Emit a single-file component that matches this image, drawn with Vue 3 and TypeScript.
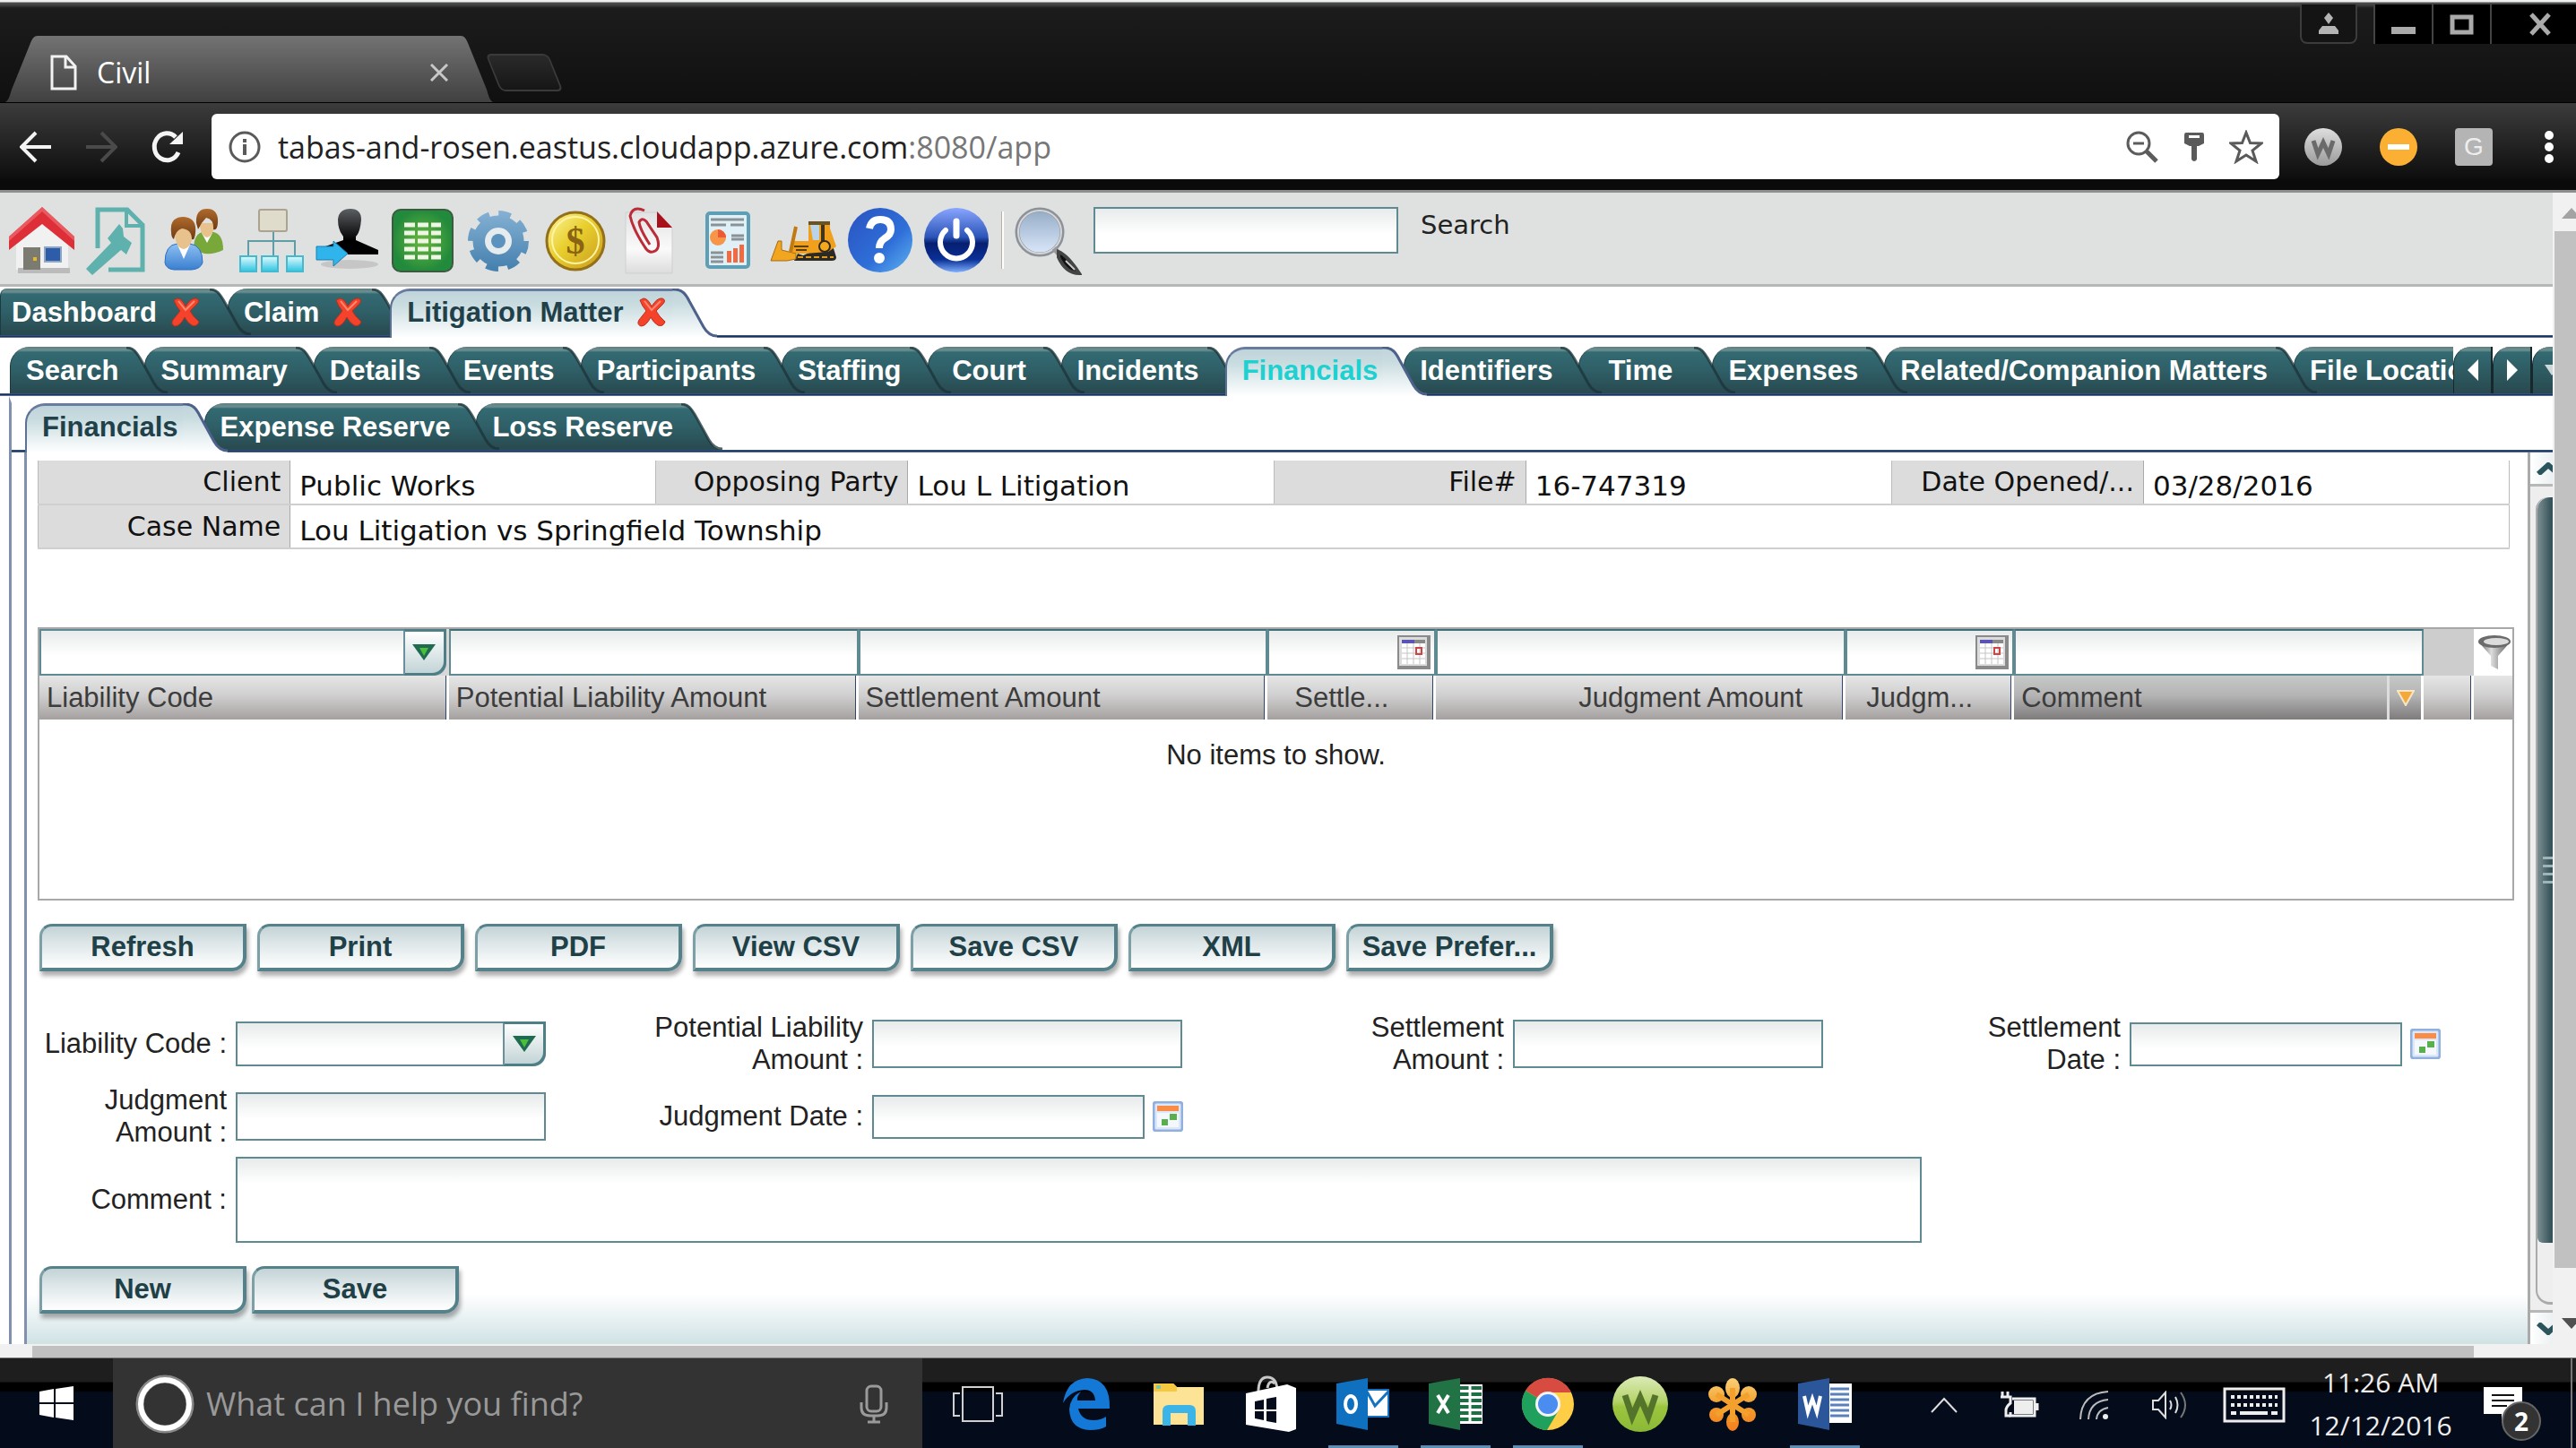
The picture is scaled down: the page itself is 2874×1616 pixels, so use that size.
<script setup lang="ts">
import { ref } from 'vue'

interface Tab {
  label: string
  closable?: boolean
  active?: boolean
}

interface GridColumn {
  key: string
  label: string
  kind: 'select' | 'text' | 'date'
  align?: 'center' | 'right'
}

const windowTabs: Tab[] = [
  { label: 'Dashboard', closable: true },
  { label: 'Claim', closable: true },
  { label: 'Litigation Matter', closable: true, active: true },
]

const matterTabs: Tab[] = [
  { label: 'Search' },
  { label: 'Summary' },
  { label: 'Details' },
  { label: 'Events' },
  { label: 'Participants' },
  { label: 'Staffing' },
  { label: 'Court' },
  { label: 'Incidents' },
  { label: 'Financials', active: true },
  { label: 'Identifiers' },
  { label: 'Time' },
  { label: 'Expenses' },
  { label: 'Related/Companion Matters' },
  { label: 'File Location' },
]

const financialTabs: Tab[] = [
  { label: 'Financials', active: true },
  { label: 'Expense Reserve' },
  { label: 'Loss Reserve' },
]

const tabRows = [
  { id: 'windows', tabs: windowTabs },
  { id: 'matter', tabs: matterTabs },
  { id: 'financial', tabs: financialTabs },
]

const columns: GridColumn[] = [
  { key: 'liability', label: 'Liability Code', kind: 'select' },
  { key: 'potential', label: 'Potential Liability Amount', kind: 'text' },
  { key: 'settlement', label: 'Settlement Amount', kind: 'text' },
  { key: 'settleDate', label: 'Settle...', kind: 'date', align: 'center' },
  { key: 'judgment', label: 'Judgment Amount', kind: 'text', align: 'right' },
  { key: 'judgDate', label: 'Judgm...', kind: 'date', align: 'center' },
]

const gridActions = ['Refresh', 'Print', 'PDF', 'View CSV', 'Save CSV', 'XML', 'Save Prefer...']

const form = ref({
  liability: '',
  potential: '',
  settlement: '',
  settlementDate: '',
  judgment: '',
  judgmentDate: '',
  comment: '',
})
const query = ref('')
</script>

<template>
  <div class="screen">
    <svg class="defs" width="0" height="0" aria-hidden="true">
      <defs>
        <linearGradient id="tabDark" x1="0" y1="0" x2="0" y2="1">
          <stop offset="0" stop-color="#5f7f80" /><stop offset=".07" stop-color="#6c8f91" />
          <stop offset=".12" stop-color="#336a72" /><stop offset=".5" stop-color="#2f5f67" /><stop offset="1" stop-color="#28494f" />
        </linearGradient>
        <linearGradient id="tabLight" x1="0" y1="0" x2="0" y2="1">
          <stop offset="0" stop-color="#bfd4da" /><stop offset=".3" stop-color="#c9dce0" /><stop offset="1" stop-color="#fff" />
        </linearGradient>
        <linearGradient id="chromeTab" x1="0" y1="0" x2="0" y2="1">
          <stop offset="0" stop-color="#737373" /><stop offset="1" stop-color="#404040" />
        </linearGradient>
        <linearGradient id="gold" x1="0" y1="0" x2="1" y2="1">
          <stop offset="0" stop-color="#fff6a0" /><stop offset=".45" stop-color="#e8cf2e" /><stop offset="1" stop-color="#c99a1c" />
        </linearGradient>
        <linearGradient id="blueBall" x1="0" y1="0" x2="1" y2="1">
          <stop offset="0" stop-color="#2a52c0" /><stop offset=".6" stop-color="#2f6fd8" /><stop offset="1" stop-color="#5fb4f2" />
        </linearGradient>
        <linearGradient id="powerBall" x1="0" y1="0" x2="0" y2="1">
          <stop offset="0" stop-color="#8aa6ff" /><stop offset=".45" stop-color="#2b55b8" /><stop offset=".55" stop-color="#061f70" />
          <stop offset=".8" stop-color="#0a2f96" /><stop offset="1" stop-color="#7fb0ff" />
        </linearGradient>
        <radialGradient id="greenSheet"><stop offset="0" stop-color="#6db83e" /><stop offset="1" stop-color="#228a3c" /></radialGradient>
        <linearGradient id="gear" gradientUnits="userSpaceOnUse" x1="0" y1="0" x2="0" y2="76"><stop offset="0" stop-color="#8ab4d6" /><stop offset="1" stop-color="#3f7cab" /></linearGradient>
        <linearGradient id="cyanBox" x1="0" y1="0" x2="0" y2="1"><stop offset="0" stop-color="#e4fbff" /><stop offset="1" stop-color="#2bc4e2" /></linearGradient>
        <linearGradient id="blueShirt" x1="0" y1="0" x2="0" y2="1"><stop offset="0" stop-color="#8fc0f2" /><stop offset="1" stop-color="#3a7fd0" /></linearGradient>
        <linearGradient id="hair" x1="0" y1="0" x2="0" y2="1"><stop offset="0" stop-color="#b06a2c" /><stop offset="1" stop-color="#6e3a12" /></linearGradient>
        <linearGradient id="paper" x1="0" y1="0" x2="0" y2="1"><stop offset="0" stop-color="#e2e2e4" /><stop offset=".6" stop-color="#fafafa" /><stop offset="1" stop-color="#dcdcdc" /></linearGradient>
        <linearGradient id="bust" x1="0" y1="0" x2="0" y2="1"><stop offset="0" stop-color="#5c5f63" /><stop offset=".7" stop-color="#000" /></linearGradient>
        <linearGradient id="lens" x1="0" y1="0" x2="0" y2="1"><stop offset="0" stop-color="#93abc6" /><stop offset="1" stop-color="#dce8fa" /></linearGradient>
        <linearGradient id="limeBall" x1="0" y1="0" x2="0" y2="1"><stop offset="0" stop-color="#dcebb8" /><stop offset=".45" stop-color="#b5d36a" /><stop offset=".55" stop-color="#9cc53f" /><stop offset="1" stop-color="#8ab836" /></linearGradient>
        <linearGradient id="greyBall" x1="0" y1="0" x2="0" y2="1"><stop offset="0" stop-color="#dedede" /><stop offset="1" stop-color="#9a9a9a" /></linearGradient>
        <linearGradient id="petals" gradientUnits="userSpaceOnUse" x1="0" y1="0" x2="0" y2="60"><stop offset="0" stop-color="#fbd27a" /><stop offset=".5" stop-color="#f3a02c" /><stop offset="1" stop-color="#f57f20" /></linearGradient>
        <linearGradient id="funnel" x1="0" y1="0" x2="1" y2="0"><stop offset="0" stop-color="#555" /><stop offset=".4" stop-color="#ddd" /><stop offset="1" stop-color="#555" /></linearGradient>
      </defs>
    </svg>

    <!-- Browser frame -->
    <header class="browser">
      <div class="titlebar">
        <div class="browser-tab">
          <svg class="slope" width="36" height="74" viewBox="0 0 36 74"><path d="M0 74C4 72 5 66 7 60L28 8C30 3 32 0 36 0V74Z" fill="url(#chromeTab)" /></svg>
          <div class="browser-tab-body">
            <svg width="30" height="40" viewBox="0 0 30 40" fill="none" stroke="#f2f2f2" stroke-width="3"><path d="M2 2H18L28 13V38H2Z" /><path d="M17 2V14H28" /></svg>
            <span class="browser-tab-title">Civil</span>
            <button class="plain" aria-label="Close tab"><svg width="20" height="20" viewBox="0 0 20 20" stroke="#c8c8c8" stroke-width="3"><path d="M1 1L19 19M19 1L1 19" /></svg></button>
          </div>
          <svg class="slope" width="36" height="74" viewBox="0 0 36 74"><path d="M0 0C4 0 6 3 8 8L29 60C31 66 32 72 36 74H0Z" fill="url(#chromeTab)" /></svg>
        </div>
        <button class="new-tab" aria-label="New tab"></button>
        <button class="profile" aria-label="Profile"><svg width="24" height="26" viewBox="0 0 24 26" fill="#b4b4b4"><path d="M12 1L17 7L12 14L7 7Z" /><path d="M1 25V21L5 16H19L23 21V25Z" /></svg></button>
        <div class="window-controls">
          <button aria-label="Minimize"><svg width="28" height="26" viewBox="0 0 28 26"><path d="M0 16H27V24H0Z" fill="#aaa" /></svg></button>
          <button aria-label="Maximize"><svg width="28" height="26" viewBox="0 0 28 26"><path d="M3 5H24V22H3Z" fill="none" stroke="#aaa" stroke-width="5" /></svg></button>
          <button class="close" aria-label="Close"><svg width="26" height="26" viewBox="0 0 26 26"><path d="M3 2L23 24M23 2L3 24" stroke="#aaa" stroke-width="5" /></svg></button>
        </div>
      </div>
      <div class="addressbar">
        <button class="plain" aria-label="Back"><svg width="36" height="36" viewBox="0 0 36 36" fill="none" stroke="#f4f4f4" stroke-width="4"><path d="M35 18H3M18 2L2 18L18 34" /></svg></button>
        <button class="plain" aria-label="Forward"><svg width="36" height="36" viewBox="0 0 36 36" fill="none" stroke="#4a4a4a" stroke-width="4"><path d="M1 18H33M18 2L34 18L18 34" /></svg></button>
        <button class="plain" aria-label="Reload"><svg width="38" height="38" viewBox="0 0 38 38"><path d="M31 25A14 15 0 1 1 28 8" fill="none" stroke="#f4f4f4" stroke-width="5" /><path d="M36 2V16H21Z" fill="#f4f4f4" /></svg></button>
        <div class="omnibox">
          <svg width="38" height="38" viewBox="0 0 38 38"><circle cx="19" cy="19" r="16" fill="none" stroke="#5a5a5a" stroke-width="3" /><path d="M17 16H21V28H17ZM17 10H21V14H17Z" fill="#5a5a5a" /></svg>
          <span class="url">tabas-and-rosen.eastus.cloudapp.azure.com<span class="path">:8080/app</span></span>
          <svg width="38" height="38" viewBox="0 0 38 38" fill="none" stroke="#5c5c5c"><circle cx="15" cy="15" r="12" stroke-width="3" /><path d="M9 15H21" stroke-width="3" /><path d="M24 24L35 35" stroke-width="5" /></svg>
          <svg width="22" height="34" viewBox="0 0 22 34"><path d="M2 1H20Q22 1 22 4V13L16 16H14V31Q11 35 8 31V16H6L0 13V4Q0 1 2 1Z" fill="#5a5a5a" /><path d="M5 4H17V7H5Z" fill="#fff" /></svg>
          <svg width="38" height="38" viewBox="0 0 38 38"><path d="M19 3L23.500 14.500L36 15L26 23L30 35L19 28L8 35L12 23L2 15L14.500 14.500Z" fill="none" stroke="#5a5a5a" stroke-width="3" /></svg>
        </div>
        <svg width="42" height="42" viewBox="0 0 42 42"><circle cx="21" cy="21" r="21" fill="url(#greyBall)" /><path d="M10 14L15 29L21 16L27 29L32 14" fill="none" stroke="#6a6a6a" stroke-width="5" /></svg>
        <svg width="42" height="42" viewBox="0 0 42 42"><circle cx="21" cy="21" r="21" fill="#fbb034" /><path d="M9 18H33V24H9Z" fill="#fff" /></svg>
        <span class="g-badge">G</span>
        <button class="plain" aria-label="Menu"><svg width="10" height="36" viewBox="0 0 10 36" fill="#fff"><circle cx="5" cy="5" r="5" /><circle cx="5" cy="18" r="5" /><circle cx="5" cy="31" r="5" /></svg></button>
      </div>
    </header>

    <div class="viewport">
      <div class="app">
        <!-- Application toolbar -->
        <nav class="toolbar" aria-label="Main">
          <button class="tool" aria-label="Home"><svg width="76" height="76" viewBox="0 0 76 76"><path d="M10 38L39 10L68 38V70H10Z" fill="#f1f1f1" /><path d="M12 68H70V74H12Z" fill="#bbb" /><path d="M39 0L75 33V48L39 19L2 48V33Z" fill="#de2f38" /><path d="M39 0L2 33V38L39 5L75 38V33Z" fill="#f0787c" opacity=".6" /><path d="M18 45H37V70H18Z" fill="#7b7b72" /><path d="M29 56H33V60H29Z" fill="#e8b820" /><path d="M42 45H60V61H42Z" fill="#2d5ca8" stroke="#8fa5c4" stroke-width="2" /></svg></button>
          <button class="tool" aria-label="Matters"><svg width="76" height="76" viewBox="0 0 76 76"><path d="M16 46V3H49L66 20V70H28" fill="none" stroke="#5fb1ae" stroke-width="5" /><path d="M48 3V21H66" fill="none" stroke="#5fb1ae" stroke-width="4" /><path d="M40 19L44 24L45 33L54 40L48 53L42 48L10 76L3 69L31 40L27 35Z" fill="#5fb1ae" /></svg></button>
          <button class="tool" aria-label="Contacts"><svg width="76" height="76" viewBox="0 0 76 76"><path d="M38 48Q38 28 50 28H60Q71 30 71 48Q62 53 50 52Z" fill="#79a83a" /><path d="M47 29L53 40L59 29Z" fill="#fff" /><path d="M45 18Q45 32 53 34Q61 32 61 18Z" fill="#e8c28c" /><path d="M41 18Q40 2 53 2Q66 2 65 18Q64 27 60 25Q61 14 52 12Q46 18 43 25Z" fill="url(#hair)" /><path d="M6 62Q6 42 20 41H34Q48 43 48 62Q46 69 36 70H16Q7 69 6 62Z" fill="url(#blueShirt)" stroke="#2f6fc0" /><path d="M20 42L27 58L34 42Z" fill="#fff" /><path d="M17 30Q18 46 27 47Q36 45 37 30L27 20Z" fill="#e8c28c" /><path d="M13 28Q11 11 27 11Q42 12 40 29Q39 38 36 36Q36 25 25 24Q18 26 16 36Q13 34 13 28Z" fill="url(#hair)" /></svg></button>
          <button class="tool" aria-label="Hierarchy"><svg width="76" height="76" viewBox="0 0 76 76"><path d="M42 27V56M14 55V38H66V55" fill="none" stroke="#5f9ea6" stroke-width="2" /><rect x="26" y="3" width="31" height="24" rx="2" fill="#e0dccc" stroke="#a9a390" stroke-width="2" /><g fill="url(#cyanBox)" stroke="#45b9cd" stroke-width="2"><rect x="5" y="55" width="18" height="17" /><rect x="29" y="55" width="18" height="17" /><rect x="57" y="55" width="18" height="17" /></g></svg></button>
          <button class="tool" aria-label="Transfer"><svg width="76" height="76" viewBox="0 0 76 76"><ellipse cx="42" cy="64" rx="32" ry="5" fill="#c6c6c6" /><path d="M29 14Q30 2 43 2Q55 2 55 14Q54 28 49 33V37L74 48V53H8L15 44L35 37V33Q29 26 29 14Z" fill="url(#bust)" /><path d="M5 44H24V38L40 52L24 66V59H5Z" fill="#2fb4ec" stroke="#1a80b4" /></svg></button>
          <button class="tool" aria-label="Spreadsheet"><svg width="76" height="76" viewBox="0 0 76 76"><rect x="5" y="3" width="67" height="69" rx="9" fill="url(#greenSheet)" stroke="#3c5a40" stroke-width="2" /><path d="M18 20H59M18 29H59M18 38H59M18 47H59M18 56H59" stroke="#eef6e4" stroke-width="5" stroke-dasharray="12 3" /></svg></button>
          <button class="tool" aria-label="Settings"><svg width="76" height="76" viewBox="0 0 76 76"><circle cx="38" cy="38" r="29" fill="none" stroke="url(#gear)" stroke-width="10" stroke-dasharray="13 9.776" /><circle cx="38" cy="38" r="21" fill="none" stroke="url(#gear)" stroke-width="15" /><circle cx="38" cy="38" r="15" fill="#e6ebee" /><circle cx="38" cy="38" r="8" fill="#5c93be" /></svg></button>
          <button class="tool" aria-label="Billing"><svg width="76" height="76" viewBox="0 0 76 76"><circle cx="39" cy="38" r="32" fill="url(#gold)" stroke="#94701a" stroke-width="3" /><circle cx="39" cy="37" r="26" fill="none" stroke="#fff3a6" stroke-width="2" /><text x="39" y="52" text-anchor="middle" class="coin">$</text></svg></button>
          <button class="tool" aria-label="Attachments"><svg width="76" height="76" viewBox="0 0 76 76"><path d="M10 6H46L62 24V74H10Z" fill="url(#paper)" stroke="#cfcfcf" /><path d="M45 5L62 23H45Z" fill="#a8101c" /><path d="M31 4Q18 -2 15 10Q18 24 31 44Q36 53 43 49Q49 45 45 34L33 16Q28 11 25 17Q26 25 37 42" fill="none" stroke="#bb2c38" stroke-width="3" /></svg></button>
          <button class="tool" aria-label="Reports"><svg width="76" height="76" viewBox="0 0 76 76"><rect x="16" y="7" width="46" height="60" rx="3" fill="#dff0f6" stroke="#5f9fb6" stroke-width="4" /><path d="M20 14H57M20 20H37M42 20H57M43 32H57M43 36H57M20 51H34M20 56H34M20 61H34" stroke="#8b9296" stroke-width="3" /><circle cx="28" cy="34" r="9" fill="#f79548" /><path d="M28 34V25A9 9 0 0 1 37 34Z" fill="#ee5a38" /><path d="M38 62V49H43V62ZM45 62V46H50V62ZM52 62V42H57V62Z" fill="#f06a42" /></svg></button>
          <button class="tool" aria-label="Operations"><svg width="76" height="76" viewBox="0 0 76 76"><path d="M38 54L70 40L75 56Q75 60 70 60H28L32 52Z" fill="#2d2a24" /><path d="M26 38H44V16H68V24L75 44L66 50L40 52H26Z" fill="#f0a01c" /><path d="M44 16H68V20H44Z" fill="#6a5424" /><path d="M46 20H56V37H49Z" fill="#b9d3e8" /><path d="M58 20H62V40H58Z" fill="#40341c" /><path d="M28 44H44M30 48H42" stroke="#5a4210" stroke-width="2" /><path d="M24 50L30 22" stroke="#c07a10" stroke-width="4" /><path d="M2 60L10 38L14 38V48L30 52V58L20 60Z" fill="#f2a51e" stroke="#a86c12" /><circle cx="62" cy="44" r="6" fill="#f5a81c" stroke="#2d2a24" stroke-width="2" /><path d="M32 56H72" stroke="#e09a1c" stroke-width="2" stroke-dasharray="6 3" /></svg></button>
          <button class="tool" aria-label="Help"><svg width="76" height="76" viewBox="0 0 76 76"><circle cx="39" cy="37" r="36" fill="url(#blueBall)" /><path d="M27 24Q29 14 39 14Q51 14 51 25Q51 31 44 35Q38 39 38 46" fill="none" stroke="#fff" stroke-width="8" /><circle cx="38" cy="57" r="6" fill="#fff" /></svg></button>
          <button class="tool" aria-label="Log off"><svg width="76" height="76" viewBox="0 0 76 76"><circle cx="39" cy="37" r="36" fill="url(#powerBall)" /><path d="M27 26A18 18 0 1 0 51 26" fill="none" stroke="#fff" stroke-width="6" stroke-linecap="round" /><path d="M39 16V32" stroke="#fff" stroke-width="7" stroke-linecap="round" /></svg></button>
          <span class="tool-divider"></span>
          <svg width="76" height="76" viewBox="0 0 76 76" aria-hidden="true"><circle cx="29" cy="28" r="25" fill="url(#lens)" stroke="#8d9299" stroke-width="5" /><circle cx="29" cy="28" r="24" fill="none" stroke="#d4d6da" stroke-width="2" /><path d="M45 46L52 54" stroke="#999" stroke-width="6" /><path d="M50 50Q60 54 73 74Q58 74 50 56Z" fill="#111" stroke="#444" stroke-width="4" /><path d="M58 60L68 70" stroke="#ccc" stroke-width="2" /></svg>
          <input id="quick-search" v-model="query" class="field quick" type="text" />
          <label class="quick-label" for="quick-search">Search</label>
        </nav>

        <!-- Tab rows -->
        <div v-for="row in tabRows" :key="row.id" class="tab-row" :class="row.id">
          <div class="tab-strip" role="tablist">
            <button
              v-for="(tab, i) in row.tabs"
              :key="tab.label"
              class="tab"
              :class="{ active: tab.active }"
              role="tab"
              :aria-selected="!!tab.active"
              :style="{ zIndex: tab.active ? 40 : 30 - i }"
            >
              <span class="tab-body">
                <span>{{ tab.label }}</span>
                <svg v-if="tab.closable" width="32" height="34" viewBox="0 0 32 34"><path d="M7 2Q12 2 16 11Q22 1 28 2Q33 4 28 9L21 16Q24 22 31 28Q29 34 23 32Q18 29 15 23Q10 33 4 33Q-1 31 2 26L10 16Q5 10 3 4Z" fill="#f5432b" stroke="#b8301c" /><path d="M8 5L16 15L26 5" fill="none" stroke="#ff8a70" stroke-width="2" /></svg>
              </span>
              <svg v-if="tab.active" class="tab-cap" width="50" height="55" viewBox="0 0 50 55"><path d="M0 0H2C12 0 15 5 20 14L35 43C39 50 43 54 50 54V55H0Z" fill="url(#tabLight)" /><path d="M0 1H2C11 1 15 6 19 14L35 43C39 50 43 53 50 53" fill="none" stroke="#4d618a" stroke-width="3" /></svg>
              <svg v-else class="tab-cap" width="50" height="52" viewBox="0 0 50 52"><path d="M0 0H2C12 0 15 5 20 14L35 41C39 48 43 52 50 52H0Z" fill="url(#tabDark)" /><path d="M4 1C12 1 15 6 20 14L35 41C39 48 43 51 50 51" fill="none" stroke="#1b3338" stroke-width="3" opacity=".75" /></svg>
            </button>
          </div>
          <div v-if="row.id === 'matter'" class="tab-nav">
            <button aria-label="Scroll tabs left"><svg width="12" height="24" viewBox="0 0 12 24"><path d="M12 0V24L0 12Z" fill="#fff" /></svg></button>
            <button aria-label="Scroll tabs right"><svg width="12" height="24" viewBox="0 0 12 24"><path d="M0 0V24L12 12Z" fill="#fff" /></svg></button>
            <button class="cut" aria-label="Choose tab"><svg width="16" height="12" viewBox="0 0 16 12"><path d="M0 0H16L8 12Z" fill="#cfd8d8" /></svg></button>
          </div>
        </div>

        <div class="frame-outer">
          <div class="frame-inner">
            <main class="pane">
              <table class="summary">
                <colgroup>
                  <template v-for="n in 4" :key="n"><col class="c-label" /><col /></template>
                </colgroup>
                <tbody>
                  <tr>
                    <th scope="row">Client</th><td>Public Works</td>
                    <th scope="row">Opposing Party</th><td>Lou L Litigation</td>
                    <th scope="row">File#</th><td>16-747319</td>
                    <th scope="row">Date Opened/...</th><td>03/28/2016</td>
                  </tr>
                  <tr><th scope="row">Case Name</th><td colspan="7">Lou Litigation vs Springfield Township</td></tr>
                </tbody>
              </table>

              <table class="grid">
                <colgroup>
                  <col /><col /><col /><col class="c-date" /><col /><col class="c-date" /><col /><col class="c-spare" /><col class="c-tool" />
                </colgroup>
                <thead>
                  <tr class="filters">
                    <td v-for="col in columns" :key="col.key">
                      <div v-if="col.kind === 'select'" class="combo">
                        <select :aria-label="'Filter ' + col.label"><option></option></select>
                        <span class="picker"><svg width="26" height="18" viewBox="0 0 26 18"><path d="M0 0H26L13 18Z" fill="#1f6b52" /><path d="M8 4H18L13 13Z" fill="#4bbf3a" /></svg></span>
                      </div>
                      <div v-else class="field filter">
                        <input type="text" :aria-label="'Filter ' + col.label" />
                        <button v-if="col.kind === 'date'" class="plain" :aria-label="'Pick ' + col.label"><svg width="37" height="38" viewBox="0 0 37 38"><path d="M0 0H37V38H0Z" fill="#8a8a8a" /><path d="M2 2H33V34H2Z" fill="#dcdcdc" /><path d="M5 5H31V32H5Z" fill="#fff" /><path d="M5 5H31V9H5Z" fill="#888" /><path d="M5 5H19V9H5Z" fill="#5a55b4" /><path d="M5 14H31M5 20H31M5 26H31M11 9V32M18 9V32M25 9V32" stroke="#c4c4c4" /><path d="M21 14H27V21H21Z" fill="none" stroke="#c44" stroke-width="2" /></svg></button>
                      </div>
                    </td>
                    <td><div class="field filter"><input type="text" aria-label="Filter Comment" /></div></td>
                    <td class="blank"></td>
                    <td class="funnel">
                      <button class="plain" aria-label="Apply filter"><svg width="38" height="40" viewBox="0 0 38 40"><path d="M1 8L15 24V35L23 39V24L37 8Z" fill="url(#funnel)" /><ellipse cx="19" cy="8" rx="18" ry="7" fill="#6b6b6b" /><ellipse cx="21" cy="8" rx="14" ry="4" fill="#dcdcdc" /></svg></button>
                    </td>
                  </tr>
                  <tr class="heads">
                    <th v-for="col in columns" :key="col.key" scope="col" :class="col.align">{{ col.label }}</th>
                    <th scope="col" class="sorted">
                      <div>Comment<span class="sort"><svg width="20" height="18" viewBox="0 0 20 18"><path d="M1 1H19L10 17Z" fill="#f2a83a" stroke="#f8e6c4" stroke-width="2" /></svg></span></div>
                    </th>
                    <td></td>
                    <td class="last"></td>
                  </tr>
                </thead>
                <tbody>
                  <tr><td class="empty" colspan="9">No items to show.</td></tr>
                </tbody>
              </table>

              <div class="actions">
                <button v-for="a in gridActions" :key="a" class="btn">{{ a }}</button>
              </div>

              <form class="editor" @submit.prevent>
                <label for="f-liability">Liability Code :</label>
                <div class="combo small">
                  <select id="f-liability" v-model="form.liability"><option value=""></option></select>
                  <span class="picker"><svg width="26" height="18" viewBox="0 0 26 18"><path d="M0 0H26L13 18Z" fill="#1f6b52" /><path d="M8 4H18L13 13Z" fill="#4bbf3a" /></svg></span>
                </div>
                <label for="f-potential">Potential Liability Amount :</label>
                <input id="f-potential" v-model="form.potential" class="field" type="text" />
                <label for="f-settlement">Settlement<br />Amount :</label>
                <input id="f-settlement" v-model="form.settlement" class="field" type="text" />
                <label for="f-settle-date">Settlement<br />Date :</label>
                <div class="date">
                  <input id="f-settle-date" v-model="form.settlementDate" class="field" type="text" />
                  <button class="plain" type="button" aria-label="Pick settlement date"><svg width="34" height="34" viewBox="0 0 34 34"><rect x="1" y="1" width="32" height="32" rx="3" fill="#dce8f8" stroke="#8fb0e0" stroke-width="3" /><path d="M5 5H29V11H5Z" fill="#fa8c46" /><path d="M5 13H29V29H5Z" fill="#f4f8fd" /><path d="M19 14H27V21H19ZM10 20H17V27H10Z" fill="#58b04c" /></svg></button>
                </div>
                <label for="f-judgment">Judgment<br />Amount :</label>
                <input id="f-judgment" v-model="form.judgment" class="field" type="text" />
                <label for="f-judgment-date">Judgment Date :</label>
                <div class="date">
                  <input id="f-judgment-date" v-model="form.judgmentDate" class="field" type="text" />
                  <button class="plain" type="button" aria-label="Pick judgment date"><svg width="34" height="34" viewBox="0 0 34 34"><rect x="1" y="1" width="32" height="32" rx="3" fill="#dce8f8" stroke="#8fb0e0" stroke-width="3" /><path d="M5 5H29V11H5Z" fill="#fa8c46" /><path d="M5 13H29V29H5Z" fill="#f4f8fd" /><path d="M19 14H27V21H19ZM10 20H17V27H10Z" fill="#58b04c" /></svg></button>
                </div>
                <label class="row-start" for="f-comment">Comment :</label>
                <textarea id="f-comment" v-model="form.comment" class="field comment"></textarea>
              </form>

              <div class="actions tight">
                <button class="btn">New</button>
                <button class="btn">Save</button>
              </div>
            </main>
            <div class="inner-scroll" aria-hidden="true">
              <span class="arrow"><svg width="26" height="14" viewBox="0 0 26 14"><path d="M2 13L13 3L24 13" fill="none" stroke="#2b555c" stroke-width="6" /></svg></span>
              <span class="track"><span class="thumb"><i></i><i></i><i></i><i></i></span></span>
              <span class="arrow"><svg width="26" height="14" viewBox="0 0 26 14"><path d="M2 1L13 11L24 1" fill="none" stroke="#2b555c" stroke-width="6" /></svg></span>
            </div>
          </div>
        </div>
      </div>
      <div class="page-scroll" aria-hidden="true">
        <svg width="22" height="12" viewBox="0 0 22 12"><path d="M0 12L11 0L22 12Z" fill="#a3a3a3" /></svg>
        <span></span>
        <svg width="22" height="12" viewBox="0 0 22 12"><path d="M0 0H22L11 12Z" fill="#505050" /></svg>
      </div>
    </div>
    <div class="bottom-scroll" aria-hidden="true"><span></span></div>

    <!-- Taskbar -->
    <footer class="taskbar">
      <button class="start" aria-label="Start"><svg width="38" height="38" viewBox="0 0 38 38" fill="#fff"><path d="M0 6L16 3V18H0ZM18 3L38 0V18H18ZM0 20H16V35L0 32ZM18 20H38V38L18 35Z" /></svg></button>
      <label class="cortana">
        <svg width="66" height="68" viewBox="0 0 66 68"><circle cx="33" cy="34" r="28" fill="none" stroke="#888" stroke-width="9" /><circle cx="33" cy="34" r="27" fill="none" stroke="#fff" stroke-width="6" /></svg>
        <input type="text" placeholder="What can I help you find?" aria-label="What can I help you find?" />
        <svg width="32" height="44" viewBox="0 0 32 44" fill="none" stroke="#9a9a9a" stroke-width="3"><rect x="8" y="2" width="16" height="28" rx="5" /><path d="M2 20V26Q2 35 12 35H20Q30 35 30 26V20M16 35V42M9 42H23" /></svg>
      </label>
      <button class="task wide" aria-label="Task view"><svg width="58" height="40" viewBox="0 0 58 40" fill="none" stroke="#d0d0d0" stroke-width="2"><path d="M12 1H46V39H12ZM9 8H2V33H9M49 8H56V33H49" /></svg></button>
      <button class="task" aria-label="Edge"><svg width="60" height="60" viewBox="0 0 60 60"><path d="M4 29Q8 2 31 1Q57 2 56 35H21Q24 48 38 48Q46 48 52 44V55Q46 59 34 59Q12 58 11 36Q12 22 24 16Q19 22 20 26H40Q39 14 28 14Q12 15 4 29Z" fill="#1479d6" /></svg></button>
      <button class="task" aria-label="File Explorer"><svg width="60" height="60" viewBox="0 0 60 60"><path d="M2 7H24L28 11H58V53H2Z" fill="#fde395" /><path d="M2 7H24L28 11V16H2Z" fill="#f5c840" /><path d="M5 9H10V13H5Z" fill="#7ec8a8" /><path d="M12 54V38Q12 31 19 31H42Q49 31 49 38V54H40V40H21V54Z" fill="#3cb4e7" /></svg></button>
      <button class="task" aria-label="Store"><svg width="60" height="64" viewBox="0 0 60 64"><path d="M16 18Q16 2 26 2Q36 2 37 16M26 14Q28 4 34 9" fill="none" stroke="#c8c8c8" stroke-width="3" /><path d="M2 20L48 10L58 14V60L50 63L2 55Z" fill="#fff" /><path d="M12 29L22 27V38H12ZM25 26L36 24V38H25ZM12 40H22V50L12 48ZM25 40H36V53L25 51Z" fill="#060c1c" /></svg></button>
      <button class="task open" aria-label="Outlook"><svg width="60" height="60" viewBox="0 0 60 60"><path d="M34 14H58V44H34Z" fill="#fff" stroke="#1672c0" stroke-width="2" /><path d="M34 16L43 32L58 16" fill="none" stroke="#1672c0" stroke-width="3" /><path d="M0 7L35 1V59L0 52Z" fill="#1070c0" /><ellipse cx="16" cy="30" rx="6" ry="9" fill="none" stroke="#fff" stroke-width="4" /></svg></button>
      <button class="task open" aria-label="Excel"><svg width="60" height="60" viewBox="0 0 60 60"><path d="M33 8H60V52H33Z" fill="#fff" /><path d="M34 12H59M34 19H59M34 26H59M34 33H59M34 40H59M34 47H59" stroke="#1d7044" stroke-width="4" /><path d="M46 8V52" stroke="#fff" stroke-width="3" /><path d="M0 7L35 1V59L0 52Z" fill="#217346" /><path d="M10 20L22 40M22 20L10 40" stroke="#fff" stroke-width="4" /></svg></button>
      <button class="task open" aria-label="Chrome"><svg width="60" height="60" viewBox="0 0 60 60"><circle cx="30" cy="30" r="29" fill="#ffcd46" /><path d="M30 30L5 15A29 29 0 0 1 56 17H30Z" fill="#d84b40" /><path d="M30 30L5 15A29 29 0 0 0 29 59L42 37Z" fill="#1fa05c" /><circle cx="30" cy="30" r="14" fill="#f4f4f4" /><circle cx="30" cy="30" r="11" fill="#4a8cf0" /></svg></button>
      <button class="task" aria-label="Webroot"><svg width="62" height="62" viewBox="0 0 62 62"><circle cx="31" cy="31" r="31" fill="url(#limeBall)" /><path d="M14 21L22 45L31 24L40 45L48 21" fill="none" stroke="#54742c" stroke-width="7" /></svg></button>
      <button class="task" aria-label="Citrix"><svg width="60" height="60" viewBox="0 0 60 60"><g fill="url(#petals)"><ellipse cx="30" cy="12" rx="8" ry="11" /><ellipse cx="30" cy="50" rx="7" ry="10" /><circle cx="12" cy="19" r="9" /><circle cx="48" cy="19" r="9" /><circle cx="12" cy="42" r="8" /><circle cx="48" cy="42" r="8" /></g><path d="M30 12V50M12 19L48 42M48 19L12 42" stroke="#f3a02c" stroke-width="6" /></svg></button>
      <button class="task open" aria-label="Word"><svg width="60" height="60" viewBox="0 0 60 60"><path d="M33 7H60V51H33Z" fill="#fff" /><path d="M36 13H57M36 19H57M36 25H57M36 31H57M36 37H57M36 43H57" stroke="#5a80bc" stroke-width="3" /><path d="M0 7L35 1V59L0 52Z" fill="#2b579a" /><path d="M7 21L11 39L16 24L21 39L25 21" fill="none" stroke="#fff" stroke-width="4" /></svg></button>

      <div class="tray">
        <button aria-label="Show hidden icons"><svg width="30" height="18" viewBox="0 0 30 18" fill="none" stroke="#ddd" stroke-width="2"><path d="M1 17L15 2L29 17" /></svg></button>
        <button aria-label="Power"><svg width="44" height="32" viewBox="0 0 44 32"><path d="M3 1V7M9 1V7M1 7H12V14Q7 18 7 22V28H12" fill="none" stroke="#eee" stroke-width="3" /><path d="M14 9H39V28H12V24M42 14V22" fill="none" stroke="#eee" stroke-width="3" /><path d="M16 11H37V26H16Z" fill="#eee" /></svg></button>
        <button aria-label="Network"><svg width="34" height="34" viewBox="0 0 34 34" fill="none" stroke="#bbb" stroke-width="2"><path d="M1 33Q2 4 32 2M10 33Q11 13 32 11M19 33Q20 22 32 20" /><circle cx="29" cy="30" r="3" fill="#eee" stroke="none" /></svg></button>
        <button aria-label="Volume"><svg width="40" height="32" viewBox="0 0 40 32" fill="none" stroke="#ddd" stroke-width="2"><path d="M1 11H7L15 2V30L7 21H1ZM20 11Q23 16 20 21M26 7Q31 16 26 25" /><path d="M32 2Q42 16 32 30" stroke="#777" /></svg></button>
        <button class="kbd" aria-label="Touch keyboard"><svg width="70" height="40" viewBox="0 0 70 40" fill="none" stroke="#eee"><path d="M2 2H68V38H2Z" stroke-width="3" /><path d="M9 11H61M9 20H61" stroke-width="4" stroke-dasharray="4 3" /><path d="M9 29H15M19 29H50M54 29H61" stroke-width="4" /></svg></button>
        <time class="clock"><span>11:26 AM</span><span>12/12/2016</span></time>
        <button class="notes" aria-label="Notifications">
          <svg width="44" height="40" viewBox="0 0 44 40"><path d="M0 0H43V30H28L20 40V30H0Z" fill="#fff" /><path d="M9 9H34M9 15H34M9 21H26" stroke="#111" stroke-width="2" /></svg>
          <span class="count">2</span>
        </button>
        <span class="show-desktop"></span>
      </div>
    </footer>
  </div>
</template>

<style>
html, body { margin: 0; background: #fff; }
</style>

<style scoped>
.screen { display: flex; flex-direction: column; min-height: 100vh; overflow: hidden; font: 31px/36px "Liberation Sans", Arial, sans-serif; color: #333; }
.screen *, .screen *::before { box-sizing: border-box; }
.defs { position: absolute; }
svg { flex: none; display: block; }
button { font: inherit; color: inherit; padding: 0; border: 0; background: none; }
.plain { display: flex; flex: none; }

/* browser frame */
.browser { background: #0a0a0a; border-bottom: 3px solid #8e8e8e; }
.titlebar { display: flex; height: 115px; align-items: flex-start; padding-left: 6px; background: linear-gradient(#eee 0 2px, #4c4f50 3px, #3c3c3c 6px, #1c1c1c 9px, #101010); border-bottom: 1px solid #000; }
.browser-tab { display: flex; align-self: flex-end; color: #fff; font: 32px/40px "Open Sans", "Noto Sans", sans-serif; }
.browser-tab-body { display: flex; align-items: center; width: 472px; padding: 8px 14px 0; background: linear-gradient(#737373, #404040); }
.browser-tab-title { flex: 1; margin-left: 22px; }
.new-tab { width: 70px; height: 42px; margin: 60px 0 0; border: 2px solid #3a3a3a; border-radius: 6px; background: linear-gradient(#2a2a2a, #161616); transform: skewX(22deg); }
.profile { display: flex; align-items: center; justify-content: center; width: 64px; height: 44px; margin: 5px 18px 0 auto; border: 2px solid #3c3c3c; border-top: 0; border-radius: 0 0 8px 8px; background: #141414; }
.window-controls { display: flex; height: 44px; margin-top: 5px; background: #000; border-left: 2px solid #444; }
.window-controls button { display: flex; align-items: center; justify-content: center; width: 65px; border-right: 2px solid #444; }
.window-controls .close { width: 94px; padding-left: 14px; border: 0; }
.addressbar { display: flex; align-items: center; height: 97px; padding: 0 25px 0 22px; gap: 42px; background: linear-gradient(#3c3c3c, #0e0e0e 84px, #0a0a0a 86px); }
.addressbar > .plain:first-child, .addressbar > .plain:nth-child(2) { margin-right: -5px; }
.addressbar > .plain:nth-child(3) { margin-right: -12px; }
.addressbar > .plain:last-child { margin-left: 16px; }
.omnibox { display: flex; flex: 1; align-items: center; gap: 28px; height: 73px; margin: 0 -14px 0 0; padding: 0 18px; background: #fff; border-radius: 6px; }
.url { flex: 1; margin-left: -10px; color: #222; font: 34px/48px "Open Sans", "Noto Sans", sans-serif; }
.path { color: #777; }
.g-badge { width: 42px; height: 42px; background: #b4b4b4; border-radius: 4px; color: #eee; font: 28px/42px "Liberation Sans", sans-serif; text-align: center; }

/* page */
.viewport { display: flex; flex: 1; }
.app { display: flex; flex: 1; flex-direction: column; min-width: 0; background: #fff; }
.toolbar { display: flex; align-items: flex-start; gap: 9px; height: 105px; padding: 16px 0 0 8px; background: #dfe1e0; border-bottom: 3px solid #b6b8b8; }
.coin { font: bold 42px "Liberation Serif", serif; fill: #8a6412; }
.tool-divider { width: 3px; height: 64px; margin: 5px 2px 0 4px; background: #fff; border-left: 1px solid #b8b0a0; }
.field { border: 2px solid #5f8a92; border-radius: 0; background: linear-gradient(#e8ebeb, #fff 28px); padding: 0 6px; font: inherit; color: #222; outline: 0; }
.quick { width: 340px; height: 52px; margin-left: 4px; }
.quick-label { margin: 2px 0 0 16px; font: 29px/36px "DejaVu Sans", Verdana, sans-serif; color: #222; }

/* tabs */
.tab-row { display: flex; height: 55px; background: linear-gradient(#fff 52px, #5a6f96 52px, #16335c 53px, #16335c 54px, #5a6f96 54px); }
.tab-row.windows { margin-top: 2px; }
.tab-row.matter { margin-top: 10px; padding-left: 11px; }
.tab-row.financial { height: 63px; margin-left: 10px; padding-left: 15px; border-top: 8px solid #fff; border-left: 3px solid #8190ae; background-clip: padding-box; }
.tab-strip { display: flex; flex: 1; min-width: 0; overflow: hidden; align-items: flex-start; }
.tab { position: relative; display: flex; flex: none; height: 52px; margin-right: -26px; color: #fff; font-weight: bold; white-space: nowrap; }
.tab-body { display: flex; align-items: flex-start; justify-content: center; gap: 16px; min-width: 125px; padding: 9px 5px 0 17px; border-radius: 22px 0 0 0; background: linear-gradient(#5f7f80, #6c8f91 4px, #336a72 6px, #2f5f67 50%, #28494f); border-left: 1px solid #1b3b40; }
.tab.active { height: 55px; color: #21414a; }
.tab.active .tab-body { background: linear-gradient(#bfd4da, #c9dce0 30%, #fff); border-left: 2px solid #5d7096; border-top: 3px solid #6a7ba0; padding-top: 6px; }
.matter .tab.active { color: #1ed0cf; }
.windows .tab-body { padding-right: 7px; }
.windows .tab:first-child .tab-body { padding-left: 12px; border-radius: 8px 0 0 0; }
.tab-nav { display: flex; width: 111px; height: 52px; overflow: hidden; }
.tab-nav button { display: flex; flex: none; align-items: center; justify-content: center; width: 44px; background: linear-gradient(#5f7f80, #6c8f91 4px, #336a72 6px, #28494f); border-radius: 20px 0 0 0; border-right: 2px solid #16282c; border-left: 1px solid #16282c; }

/* frames */
.frame-outer { display: flex; flex: 1; margin-left: 10px; border-left: 3px solid #8190ae; }
.frame-inner { display: flex; flex: 1; min-width: 0; margin-left: 14px; border-left: 3px solid #8190ae; }
.pane { flex: 1; min-width: 0; padding: 9px 15px 34px 12px; background: linear-gradient(to top, #d0e2e5, #fff 56px); }

.summary { width: calc(100% - 5px); table-layout: fixed; border-collapse: collapse; font: 31px/36px "DejaVu Sans", Verdana, sans-serif; color: #111; border-right: 1px solid #bbb; }
.c-label { width: 10.200%; }
.summary th, .summary td { height: 49px; padding: 0; border-bottom: 2px solid #cfcfcf; white-space: nowrap; vertical-align: top; }
.summary th { padding: 6px 10px 0 0; background: #dcdcdc; text-align: right; font-size: 30px; font-weight: normal; border-right: 1px solid #aaa; border-left: 1px solid #bbb; }
.summary td { padding: 10px 0 0 10px; text-align: left; }

.grid { width: 100%; margin-top: 87px; table-layout: fixed; border-collapse: separate; border-spacing: 0; border: 2px solid #a8a8a8; }
.c-date { width: 188px; }
.c-spare { width: 56px; }
.c-tool { width: 43px; }
.grid td, .grid th { padding: 0; }
.filters td { height: 52px; background: #fff; }
.filters .blank { background: #cdcdcd; }
.filter { display: flex; align-items: center; height: 52px; border-color: #5f8a92; border-top-color: #3f7078; padding: 0 4px; }
.filter input { flex: 1; width: 100%; min-width: 0; height: 40px; border: 0; background: none; font: inherit; outline: 0; }
.funnel .plain { margin: auto; }
.funnel { padding-left: 2px !important; }
.combo { position: relative; display: flex; height: 52px; background: #d8d8d8; padding-right: 3px; }
.combo select { flex: 1; min-width: 0; appearance: none; border: 2px solid #5f8a92; border-radius: 0 0 14px 0; background: linear-gradient(#e8ebeb, #fff 28px); font: inherit; }
.picker { position: absolute; right: 3px; top: 0; display: flex; align-items: center; justify-content: center; width: 48px; height: 100%; border: 3px solid #4f7f86; border-left: 2px solid #6a9199; border-radius: 0 0 16px 0; background: linear-gradient(#fff, #c3d4d6); pointer-events: none; }
.combo.small .picker { right: 0; }
.heads th, .heads td { height: 49px; padding: 0 8px; border-right: 3px solid #fff; background: linear-gradient(#e6e6e6, #d0cfcf 45%, #a5a0a0); color: #3c3c3c; font-weight: normal; text-align: left; white-space: nowrap; box-shadow: inset -1px 0 #2f4668; }
.heads .center { text-align: center; padding-right: 28px; }
.heads .right { text-align: right; padding-right: 45px; }
.heads .sorted { padding-right: 0; background: linear-gradient(#c6c8c7, #b4b4b4 45%, #7e7b7b); box-shadow: none; }
.heads .last { border-right: 0; box-shadow: none; }
.sorted div { display: flex; align-items: center; height: 49px; }
.sort { display: flex; align-items: center; justify-content: center; width: 38px; height: 49px; margin-left: auto; border-left: 3px solid #ddd; }
.empty { height: 200px; padding: 22px 0 0 !important; text-align: center; vertical-align: top; color: #222; background: #fff; }

.actions { display: flex; gap: 12px; margin-top: 26px; padding-left: 2px; }
.btn { width: 231px; height: 53px; border: 3px solid #55828a; border-left-color: #7ca0a5; border-right-width: 4px; border-bottom-width: 4px; border-radius: 14px 0 16px 0; background: linear-gradient(#c3d3d6, #dde6e8 40%, #fff); box-shadow: 2px 5px 5px rgba(0, 0, 0, .32); color: #1f4047; font-weight: bold; white-space: nowrap; }

.editor { display: grid; grid-template-columns: 211px 450fr 240px 455fr 240px 428fr 240px 429fr; column-gap: 10px; row-gap: 9px; grid-auto-rows: minmax(72px, auto); align-items: center; margin-top: 45px; color: #222; }
.editor label { text-align: right; }
.editor input.field { width: 346px; height: 54px; }
.editor .date { display: flex; align-items: center; gap: 9px; }
.editor .date input.field { width: 304px; height: 49px; }
.combo.small { width: 346px; height: 50px; padding: 0; background: none; }
.row-start { grid-column: 1; }
.editor .comment { grid-column: 2 / -1; width: 74%; height: 96px; resize: none; display: block; }
.actions.tight { gap: 6px; }

.inner-scroll { display: flex; flex: none; flex-direction: column; width: 28px; overflow: hidden; background: #eee; border-left: 3px solid #aaa; }
.arrow { display: flex; flex: none; align-items: center; justify-content: center; width: 40px; height: 38px; background: linear-gradient(90deg, #fff, #dfe8ea); border-bottom: 3px solid #b8b8b8; }
.arrow:last-child { border-bottom: 0; border-top: 3px solid #b8b8b8; }
.track { display: flex; flex: 1; flex-direction: column; width: 40px; margin: 12px 0 6px 6px; padding-bottom: 66px; border-left: 2px solid #aaa; border-bottom: 3px solid #aaa; border-radius: 14px 0 0 16px; }
.thumb { display: flex; flex: 1; flex-direction: column; justify-content: center; gap: 6px; border-radius: 14px 0 0 6px; background: linear-gradient(90deg, #7b8f92, #37535a 40%, #2f4b52); }
.thumb i { width: 12px; height: 3px; margin-left: 6px; background: #9fb4b8; }
.page-scroll { display: flex; flex: none; flex-direction: column; align-items: flex-end; width: 26px; padding: 17px 0; overflow: hidden; background: #f1f1f1; }
.page-scroll svg { margin-right: -6px; }
.page-scroll span { flex: 1; width: 24px; margin: 14px 0 56px; background: #c1c1c1; }
.bottom-scroll { height: 16px; padding: 2px 114px 0 36px; background: #f1f1f1; border-bottom: 1px solid #777; }
.bottom-scroll span { display: block; height: 13px; background: #c1c1c1; }

/* taskbar */
.taskbar { display: flex; height: 100px; background: linear-gradient(#1e1e1e 26px, #000 27px, #000 36px, #040b1a 38px); color: #eee; font: 31px/48px "Open Sans", "Noto Sans", sans-serif; }
.start { display: flex; align-items: center; justify-content: center; width: 126px; }
.cortana { display: flex; align-items: center; width: 903px; padding: 2px 38px 0 25px; background: #333; }
.cortana input { flex: 1; min-width: 0; padding: 0 0 0 13px; border: 0; background: none; outline: 0; font: 36px/48px "Open Sans", "Noto Sans", sans-serif; color: #999; }
.cortana input::placeholder { color: #999; opacity: 1; }
.task { display: flex; align-items: center; justify-content: center; width: 78px; margin-right: 25px; padding-top: 4px; border-bottom: 3px solid transparent; }
.task.wide { width: 124px; margin-right: 20px; }
.task.open { border-bottom-color: #5a8cb4; }
.tray { display: flex; margin-left: auto; }
.tray button { display: flex; align-items: center; justify-content: center; width: 84px; padding-top: 4px; }
.tray .kbd { width: 104px; }
.clock { display: flex; flex-direction: column; width: 178px; padding-top: 3px; text-align: center; font-size: 30px; white-space: nowrap; }
.tray .notes { position: relative; width: 123px; padding-right: 28px; }
.count { position: absolute; left: 46px; top: 48px; width: 44px; height: 44px; border: 2px solid #666; border-radius: 50%; background: #333; font: bold 28px/40px "Open Sans", sans-serif; color: #fff; }
.show-desktop { width: 6px; border-left: 2px solid #777; }
</style>
